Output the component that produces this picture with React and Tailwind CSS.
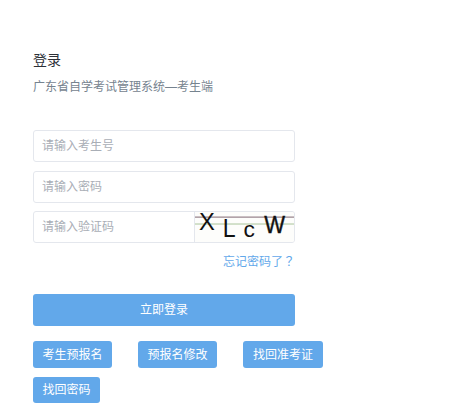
const font = '[font-family:"Liberation_Sans","Noto_Sans_CJK_SC",sans-serif]';

function Field({ placeholder, children }) {
  return (
    <div className="flex h-[32px] w-[262px] overflow-hidden rounded-[3px] border border-[#e4e7ed] bg-white">
      <input
        placeholder={placeholder}
        className="h-full min-w-0 flex-1 px-[8px] text-[12px] outline-none placeholder:text-[#a9aeb6]"
      />
      {children}
    </div>
  );
}

function Captcha() {
  return (
    <svg width="100" height="30" viewBox="0 0 100 30" className="shrink-0 border-l border-[#e4e7ed]">
      <rect width="100" height="30" fill="#fdfdfb" />
      <line x1="0" y1="5" x2="100" y2="5" stroke="#7d6470" strokeWidth="1" />
      <line x1="0" y1="12" x2="100" y2="12" stroke="#a9c49a" strokeWidth="1" />
      <g fontFamily="Liberation Sans" fill="#111">
        <text x="4" y="18" fontSize="24">X</text>
        <text x="28" y="25" fontSize="26" textLength="13" lengthAdjust="spacingAndGlyphs">L</text>
        <text x="49" y="25" fontSize="23">c</text>
        <text x="70" y="21" fontSize="25" textLength="21" lengthAdjust="spacingAndGlyphs" stroke="#111" strokeWidth="0.4">W</text>
      </g>
    </svg>
  );
}

function SmallButton({ children, className }) {
  return (
    <button className={"rounded-[3px] bg-[#62a8ea] text-[12px] text-white " + className}>
      {children}
    </button>
  );
}

export default function App() {
  return (
    <div className={"min-h-[407px] w-full bg-white pl-[33px] pt-[50px] " + font}>
      <h1 className="text-[14px] leading-[20px] font-normal text-[#2c3038]">登录</h1>
      <p className="mt-[7px] text-[12px] leading-[20px] text-[#76838f]">广东省自学考试管理系统—考生端</p>

      <div className="mt-[33px] flex flex-col gap-[8.5px]">
        <Field placeholder="请输入考生号" />
        <Field placeholder="请输入密码" />
        <Field placeholder="请输入验证码">
          <Captcha />
        </Field>
      </div>

      <div className="mt-[9px] w-[262px] text-right text-[12px] leading-[18px] text-[#62a8ea]">
        忘记密码了<span className='[font-family:"Noto_Sans_CJK_TC",sans-serif]'>？</span>
      </div>

      <button className="mt-[23px] h-[32px] w-[262px] rounded-[3px] bg-[#62a8ea] text-[12px] text-white">立即登录</button>

      <div className="mt-[15px] flex w-[300px] flex-wrap gap-x-[26px] gap-y-[9px]">
        <SmallButton className="h-[27px] w-[79px]">考生预报名</SmallButton>
        <SmallButton className="h-[27px] w-[79px]">预报名修改</SmallButton>
        <SmallButton className="h-[27px] w-[80px]">找回准考证</SmallButton>
        <SmallButton className="h-[26px] w-[67px]">找回密码</SmallButton>
      </div>
    </div>
  );
}
